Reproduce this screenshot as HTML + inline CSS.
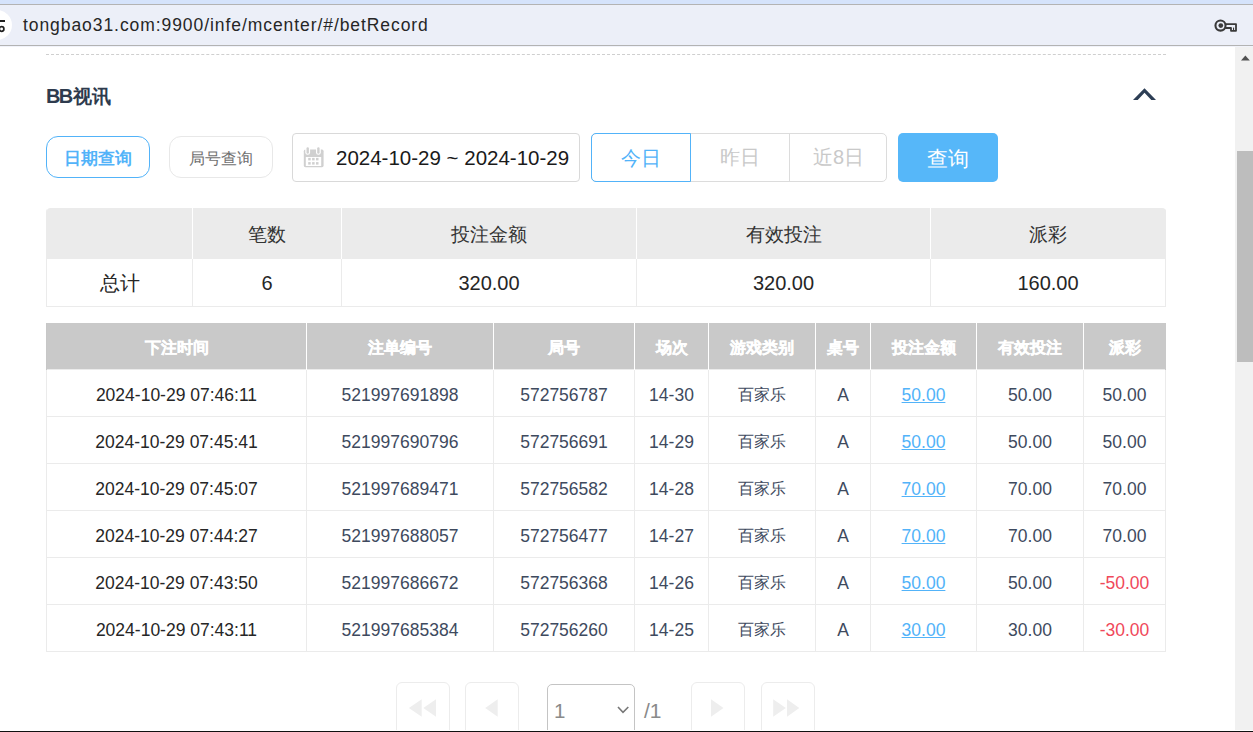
<!DOCTYPE html>
<html><head><meta charset="utf-8">
<style>
*{box-sizing:border-box;margin:0;padding:0}
html,body{width:1253px;height:732px;overflow:hidden;background:#fff;font-family:"Liberation Sans",sans-serif;position:relative}
.abs{position:absolute}
#topstrip{left:0;top:0;width:1253px;height:4px;background:#d5e3fb}
#bar{left:0;top:4px;width:1253px;height:42px;background:#eceff8;border-top:1px solid #b3b3b3;border-bottom:1px solid #b3b3b3}
#barshade{left:0;top:46px;width:1253px;height:1px;background:#f1f3fa}
#url{left:23px;top:15px;font-size:17.5px;color:#262626;white-space:nowrap;letter-spacing:0.93px}
#circ{left:-18px;top:10px;width:30px;height:30px;border-radius:50%;background:#fff}
#dash{left:46px;top:54px;width:1120px;height:0;border-top:1px dashed #cfcfcf}
#title{left:46px;top:84px;font-size:19px;font-weight:bold;color:#2e3b4e;white-space:nowrap}
.btn{height:42px;width:104px;border-radius:12px;font-size:16.5px;text-align:center;line-height:42px;background:#fff}
#b1{left:46px;top:136px;border:1px solid #52b3f9;color:#52b3f9;font-weight:bold}
#b2{left:169px;top:136px;border:1px solid #e8e8e8;color:#707070;font-size:16px;line-height:44px}
#date{left:292px;top:133px;width:288px;height:49px;border:1px solid #d9d9d9;border-radius:4px}
#datetxt{left:336px;top:146px;font-size:20.5px;color:#1a1a1a;white-space:nowrap}
#seg{left:591px;top:133px;width:296px;height:49px;border:1px solid #dcdcdc;border-radius:5px}
.sg{top:133px;height:49px;font-size:20px;text-align:center;line-height:48px;color:#c9c9c9}
#today{left:591px;width:100px;border:1px solid #52b3f9;border-radius:5px 0 0 5px;color:#52b3f9}
#yest{left:691px;width:98px;}
#d8{left:789px;width:98px;border-left:1px solid #dcdcdc}
#query{left:898px;top:133px;width:100px;height:49px;background:#56b7f9;border-radius:5px;color:#fff;font-size:21px;text-align:center;line-height:52px}
#chev{left:1130px;top:85px}
table{border-collapse:collapse;position:absolute;table-layout:fixed}
#sumwrap{left:46px;top:208px;width:1120px;height:100px;border-radius:4px 4px 1px 1px;overflow:hidden}
#sum{left:0;top:0;width:1119px}
#sum th{background:#ebebeb;height:50px;padding-top:4px;font-weight:normal;font-size:19px;color:#333;border-left:1px solid #fff}
#sum th:first-child{border-left:1px solid #ebebeb;border-top-left-radius:3px}#sum th:last-child{border-right:1px solid #ebebeb}
#sum td{height:48px;padding-top:2px;font-size:20px;color:#262626;text-align:center;border:1px solid #ebebeb}
#bets{left:46px;top:323px;width:1119px}
#bets th{background:#c9c9c9;height:46px;padding-top:5px;font-size:16px;color:#fff;border-left:1px solid #fff}
#bets th:first-child{border-left:1px solid #c7c7c7}#bets th:last-child{border-right:1px solid #c9c9c9}
#bets td{height:47px;padding-top:5px;font-size:17.5px;color:#3e4a5e;text-align:center;border:1px solid #ebebeb}
#bets td.t{color:#262626}
#bets td a{color:#52b3f9;text-decoration:underline}
#bets td.neg{color:#f0485a}
#bets .cj{font-size:16px}
#bets th{-webkit-text-stroke:0.35px #fff}
#scroll{left:1235px;top:47px;width:18px;height:683px;background:#f1f1f1}
#thumb{left:1237px;top:151px;width:16px;height:211px;background:#bdbdbd}
#blackline{left:0;top:730px;width:1253px;height:2px;background:#111;border-top:1px solid #fff}
.pb{top:682px;width:54px;height:60px;border:1.5px solid #ececec;border-radius:6px;background:#fff}
#sel{left:547px;top:684px;width:88px;height:60px;border:1.5px solid #c4c4c4;border-radius:5px}
#seltxt{left:554px;top:699px;font-size:20.5px;color:#8a8a8a}
#pgtot{left:644px;top:699px;font-size:21px;color:#8a8a8a}
</style></head><body>
<div class="abs" id="topstrip"></div>
<div class="abs" id="bar"></div><div class="abs" id="barshade"></div>
<div class="abs" id="circ"></div>
<svg class="abs" style="left:0;top:0" width="20" height="46" viewBox="0 0 20 46"><rect x="0" y="20" width="5" height="2" fill="#1f1f1f"/><circle cx="1.6" cy="29" r="2.3" fill="none" stroke="#1f1f1f" stroke-width="1.7"/></svg>
<svg class="abs" style="left:1205px;top:10px" width="40" height="30" viewBox="1205 10 40 30">
 <circle cx="1220.5" cy="25.6" r="5.05" fill="none" stroke="#3a3a3a" stroke-width="2.1"/>
 <circle cx="1220.8" cy="25.6" r="2.35" fill="#3a3a3a"/>
 <path d="M1225.2,24.1 H1236 V30.8 H1231 V28 H1225.2" fill="none" stroke="#3a3a3a" stroke-width="1.8" stroke-linejoin="round"/>
 <rect x="1233" y="27.6" width="1.1" height="2.6" fill="#3a3a3a"/>
</svg>
<div class="abs" id="url">tongbao31.com:9900/infe/mcenter/#/betRecord</div>

<div class="abs" id="dash"></div>
<div class="abs" id="title"><span style="font-size:20px;letter-spacing:-1.6px">BB</span><span style="font-size:18.5px;margin-left:1.5px">视讯</span></div>
<svg class="abs" id="chev" width="30" height="20" viewBox="1130 85 30 20"><polygon points="1133,100 1144.5,88.3 1156,100 1151.3,100 1144.5,92.8 1137.7,100" fill="#2d3e55"/></svg>

<div class="abs btn" id="b1">日期查询</div>
<div class="abs btn" id="b2">局号查询</div>
<div class="abs" id="date"></div>
<svg class="abs" style="left:298px;top:142px" width="32" height="30" viewBox="0 0 32 30">
 <rect x="5.8" y="7.6" width="19.8" height="17.6" rx="1.6" fill="#d0d0d0"/>
 <rect x="7.8" y="15" width="15.4" height="9" fill="#fff"/>
 <g fill="#d0d0d0"><rect x="10.2" y="15.9" width="2.5" height="2.5"/><rect x="14.1" y="15.9" width="2.5" height="2.5"/><rect x="18" y="15.9" width="2.5" height="2.5"/>
 <rect x="10.2" y="20.1" width="2.5" height="2.5"/><rect x="14.1" y="20.1" width="2.5" height="2.5"/><rect x="18" y="20.1" width="2.5" height="2.5"/></g>
 <rect x="7.3" y="4.6" width="4.8" height="8.2" rx="2.4" fill="#fff"/><rect x="18" y="4.6" width="4.8" height="8.2" rx="2.4" fill="#fff"/>
 <rect x="8.5" y="5.3" width="2.4" height="6.4" rx="1.2" fill="#d0d0d0"/><rect x="19.2" y="5.3" width="2.4" height="6.4" rx="1.2" fill="#d0d0d0"/>
</svg>
<div class="abs" id="datetxt">2024-10-29 ~ 2024-10-29</div>

<div class="abs sg" id="seg"></div>
<div class="abs sg" id="today">今日</div>
<div class="abs sg" id="yest">昨日</div>
<div class="abs sg" id="d8">近8日</div>
<div class="abs" id="query">查询</div>

<div class="abs" id="sumwrap"><table id="sum">
<colgroup><col style="width:146px"><col style="width:149px"><col style="width:295px"><col style="width:294px"><col style="width:235px"></colgroup>
<tr><th></th><th>笔数</th><th>投注金额</th><th>有效投注</th><th>派彩</th></tr>
<tr><td>总计</td><td>6</td><td>320.00</td><td>320.00</td><td>160.00</td></tr>
</table></div>

<table id="bets">
<colgroup><col style="width:260px"><col style="width:187px"><col style="width:141px"><col style="width:74px"><col style="width:107px"><col style="width:55px"><col style="width:106px"><col style="width:107px"><col style="width:82px"></colgroup>
<tr><th>下注时间</th><th>注单编号</th><th>局号</th><th>场次</th><th>游戏类别</th><th>桌号</th><th>投注金额</th><th>有效投注</th><th>派彩</th></tr>
<tr><td class="t">2024-10-29 07:46:11</td><td>521997691898</td><td>572756787</td><td>14-30</td><td><span class="cj">百家乐</span></td><td>A</td><td><a>50.00</a></td><td>50.00</td><td>50.00</td></tr>
<tr><td class="t">2024-10-29 07:45:41</td><td>521997690796</td><td>572756691</td><td>14-29</td><td><span class="cj">百家乐</span></td><td>A</td><td><a>50.00</a></td><td>50.00</td><td>50.00</td></tr>
<tr><td class="t">2024-10-29 07:45:07</td><td>521997689471</td><td>572756582</td><td>14-28</td><td><span class="cj">百家乐</span></td><td>A</td><td><a>70.00</a></td><td>70.00</td><td>70.00</td></tr>
<tr><td class="t">2024-10-29 07:44:27</td><td>521997688057</td><td>572756477</td><td>14-27</td><td><span class="cj">百家乐</span></td><td>A</td><td><a>70.00</a></td><td>70.00</td><td>70.00</td></tr>
<tr><td class="t">2024-10-29 07:43:50</td><td>521997686672</td><td>572756368</td><td>14-26</td><td><span class="cj">百家乐</span></td><td>A</td><td><a>50.00</a></td><td>50.00</td><td class="neg">-50.00</td></tr>
<tr><td class="t">2024-10-29 07:43:11</td><td>521997685384</td><td>572756260</td><td>14-25</td><td><span class="cj">百家乐</span></td><td>A</td><td><a>30.00</a></td><td>30.00</td><td class="neg">-30.00</td></tr>
</table>

<div class="abs pb" style="left:396px"></div>
<div class="abs pb" style="left:465px"></div>
<div class="abs" id="sel"></div>
<div class="abs" id="seltxt">1</div>
<div class="abs" id="pgtot">/1</div>
<div class="abs pb" style="left:691px"></div>
<div class="abs pb" style="left:761px"></div>

<svg class="abs" style="left:390px;top:690px" width="440" height="40" viewBox="390 690 440 40">
 <g fill="#eeeeee">
 <polygon points="408.9,708 421.7,699.3 421.7,716.7"/><polygon points="423.3,708 436,699.3 436,716.7"/>
 <polygon points="485.2,708 497.7,699.3 497.7,716.7"/>
 <polygon points="723.5,708 711,699.3 711,716.7"/>
 <polygon points="785.8,708 773.2,699.3 773.2,716.7"/><polygon points="799.3,708 787,699.3 787,716.7"/>
 </g>
 <path d="M618,707 L623,712.3 L628.3,707" fill="none" stroke="#777" stroke-width="1.6"/>
</svg>
<div class="abs" id="scroll"></div>
<svg class="abs" style="left:1235px;top:46px" width="18" height="20" viewBox="1235 46 18 20"><polygon points="1241,60.5 1245.4,55.5 1249.8,60.5" fill="#505050"/></svg>
<div class="abs" id="thumb"></div>
<div class="abs" id="blackline"></div>
</body></html>
